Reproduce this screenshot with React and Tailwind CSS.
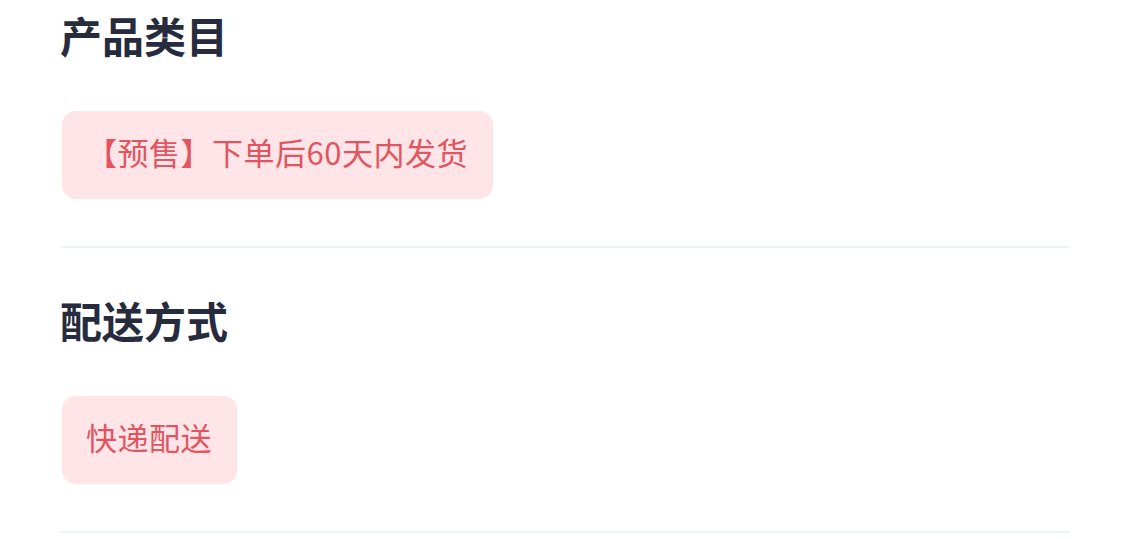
const sections = [
  { title: "产品类目", tag: "【预售】下单后60天内发货", top: "pt-[7px]" },
  { title: "配送方式", tag: "快递配送", top: "pt-[44px]" },
];

export default function App() {
  return (
    <div
      className="w-[1128px] h-[539px] overflow-hidden bg-white"
      style={{ fontFamily: '"Noto Sans CJK SC", "Noto Sans", sans-serif' }}
    >
      <div className="ml-[60px] w-[1010px]">
        {sections.map((s) => (
          <div
            key={s.title}
            className={`${s.top} pb-[47px] border-b-2 border-[#eef4f4]`}
          >
            <h2 className="text-[42px] leading-[56px] font-bold text-[#262b3d]">
              {s.title}
            </h2>
            <div className="mt-[48px] flex">
              <span className="ml-[2px] h-[88px] pl-6 pr-[25px] pb-[6px] flex items-center rounded-[14px] bg-[#ffe4e8] text-[31px] tracking-[0.5px] text-[#e2545f]">
                {s.tag}
              </span>
            </div>
          </div>
        ))}
      </div>
    </div>
  );
}
